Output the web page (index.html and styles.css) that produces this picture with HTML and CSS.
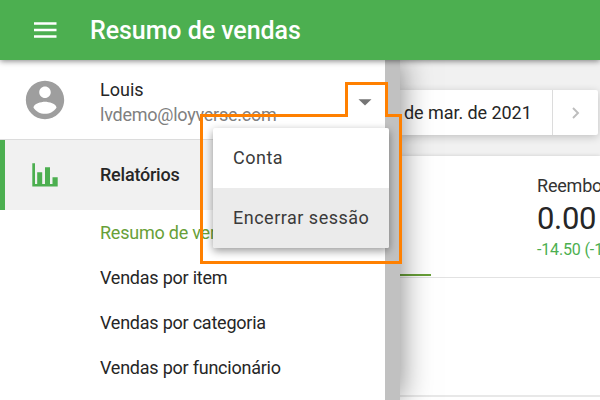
FILE: index.html
```html
<!DOCTYPE html>
<html lang="pt">
<head>
<meta charset="utf-8">
<title>Resumo de vendas</title>
<link rel="stylesheet" href="styles.css">
</head>
<body>
<header class="topbar">
  <svg class="burger" width="24" height="16" viewBox="0 0 24 16"><path d="M0 1.500h22.500M0 8h22.500M0 14.500h22.500" stroke="#fff" stroke-width="2.300"/></svg>
  <h1 class="title">Resumo de vendas</h1>
</header>
<div class="layout">
  <aside class="drawer">
    <nav class="nav">
      <div class="account">
        <svg class="avatar" width="46" height="46" viewBox="0 0 24 24"><path fill="#9e9e9e" d="M12 2C6.480 2 2 6.480 2 12s4.480 10 10 10 10-4.480 10-10S17.520 2 12 2zm0 3c1.660 0 3 1.340 3 3s-1.340 3-3 3-3-1.340-3-3 1.340-3 3-3zm0 14.200c-2.500 0-4.710-1.280-6-3.220.030-1.990 4-3.080 6-3.080 1.990 0 5.970 1.090 6 3.080-1.290 1.940-3.500 3.220-6 3.220z"/></svg>
        <div class="who"><div class="name">Louis</div><div class="email">lvdemo@loyverse.com</div></div>
        <svg class="caret" width="14" height="7" viewBox="0 0 14 7"><path d="M.5.300h13L7 6.600z" fill="#757575"/></svg>
      </div>
      <div class="section">
        <svg class="chart" width="26" height="24" viewBox="0 0 26 24"><path fill="#4caf50" d="M.3.300H3V21h2.200V9.300h5V21H13V4.300h5V21h2.500v-6.700h5.200v9.300H.3z"/></svg>
        <span>Relatórios</span>
      </div>
      <ul class="reports">
        <li class="active">Resumo de vendas</li>
        <li>Vendas por item</li>
        <li>Vendas por categoria</li>
        <li>Vendas por funcionário</li>
      </ul>
    </nav>
    <div class="scrollbar"></div>
  </aside>
  <main class="content">
    <div class="period">
      <div class="date">de mar. de 2021</div>
      <div class="next"><svg width="8" height="12" viewBox="0 0 8 12"><path d="M1 1l5 5-5 5" fill="none" stroke="#bdbdbd" stroke-width="1.900"/></svg></div>
    </div>
    <section class="card">
      <div class="summary">
        <div class="label">Reembo</div>
        <div class="value">0.00</div>
        <div class="delta">-14.50 (-1</div>
        <div class="tabmark"></div>
      </div>
      <div class="graph"></div>
    </section>
  </main>
</div>
<svg class="callout" width="202" height="182" viewBox="0 0 202 182"><path d="M1.500 33.500h145v-32h40v32h14v147H1.500z" fill="none" stroke="#ff8000" stroke-width="3"/></svg>
<div class="menu">
  <div class="item">Conta</div>
  <div class="item hover">Encerrar sessão</div>
</div>
</body>
</html>
```
FILE: styles.css
```css
* { box-sizing: border-box; }
body {
  margin: 0;
  width: 600px;
  height: 400px;
  overflow: hidden;
  position: relative;
  font-family: Roboto, "Liberation Sans", sans-serif;
  font-size: 18px;
  font-weight: 400;
  color: #262626;
  background: #f1f1f1;
  white-space: nowrap;
}
.topbar {
  position: relative;
  z-index: 3;
  height: 60px;
  display: flex;
  align-items: center;
  padding-left: 34px;
  background: #4caf50;
  box-shadow: 0 1px 6px rgba(0, 0, 0, .5);
}
.burger { flex: none; margin-right: 32px; }
.title { margin: 0; font-size: 25px; font-weight: 500; letter-spacing: -.06px; color: #fff; }
.layout { display: grid; grid-template-columns: 400px 200px; height: 340px; }
.drawer {
  position: relative;
  z-index: 2;
  display: flex;
  background: #fff;
  box-shadow: 0 0 30px rgba(0, 0, 0, .5);
}
.nav { width: 385px; }
.scrollbar { width: 15px; background: #c1c1c1; }
.account {
  height: 80px;
  display: flex;
  align-items: center;
  padding-left: 22px;
  border-bottom: 1px solid #dcdcdc;
}
.avatar { flex: none; }
.who { width: 258px; margin-left: 32px; padding-top: 4px; line-height: 25px; }
.email { color: #808080; letter-spacing: -.25px; }
.caret { margin-top: 6px; }
.section {
  height: 70px;
  display: flex;
  align-items: center;
  padding-left: 27px;
  border-left: 5px solid #4caf50;
  background: #f1f1f1;
  font-weight: 500;
  letter-spacing: -.22px;
}
.section span { margin-bottom: 2px; }
.chart { margin-right: 42px; }
.reports { margin: 0; padding: 0 0 0 100px; list-style: none; line-height: 45px; letter-spacing: -.23px; }
.active { color: #689f38; }
.content { overflow: hidden; padding-top: 30px; }
.period {
  display: flex;
  width: 198px;
  height: 45px;
  background: #fff;
  border-radius: 0 2px 2px 0;
  box-shadow: 0 2px 8px rgba(0, 0, 0, .2);
  line-height: 45px;
}
.date { width: 152px; padding-left: 4px; letter-spacing: -.06px; }
.next {
  flex: 1;
  display: flex;
  align-items: center;
  justify-content: center;
  border-left: 1px solid #dcdcdc;
}
.card { margin-top: 21px; height: 260px; background: #fff; box-shadow: 0 0 4px rgba(0, 0, 0, .15); }
.summary { height: 122px; padding: 18px 0 0 137px; border-bottom: 1px solid #e2e2e2; }
.label { line-height: 24px; letter-spacing: -.2px; color: #333; }
.value { font-size: 31px; line-height: 42px; letter-spacing: -.3px; }
.delta { font-size: 16px; line-height: 19px; color: #4caf50; letter-spacing: -.15px; }
.tabmark { width: 31px; height: 2px; margin: 15px 0 0 -137px; background: #689f38; }
.graph { height: 119px; border-bottom: 2px solid #e8e8e8; }
.callout { position: absolute; z-index: 4; left: 200px; top: 82px; }
.menu {
  position: absolute;
  z-index: 5;
  left: 213px;
  top: 128px;
  width: 176px;
  overflow: hidden;
  background: #fff;
  border-radius: 2px;
  box-shadow: 0 3px 8px rgba(0, 0, 0, .4);
}
.item { height: 60px; padding-left: 20px; line-height: 60px; letter-spacing: .5px; color: #3a3a3a; }
.hover { background: #ebebeb; }
```
